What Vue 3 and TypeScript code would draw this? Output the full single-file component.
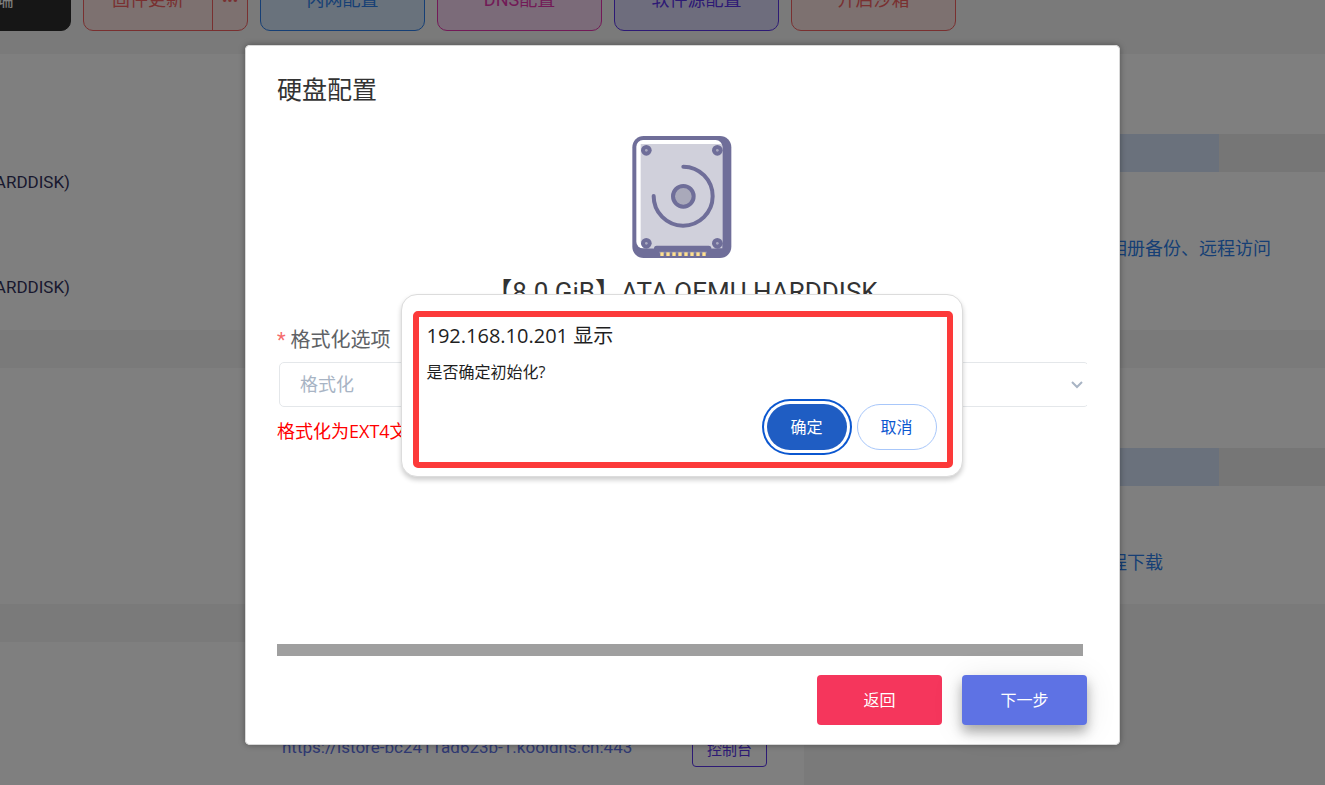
<script setup lang="ts">
import { ref } from 'vue'

interface Action {
  label: string
  tone: string
  more?: boolean
}

const actions: Action[] = [
  { label: '打开终端', tone: 'dark' },
  { label: '固件更新', tone: 'coral', more: true },
  { label: '内网配置', tone: 'blue' },
  { label: 'DNS配置', tone: 'pink' },
  { label: '软件源配置', tone: 'violet' },
  { label: '开启沙箱', tone: 'coral' },
]

interface Panel {
  disks: string[]
  used: number
  link: string
  size: string
}

const panels: Panel[] = [
  { disks: ['(QEMU HARDDISK)', '(QEMU HARDDISK)'], used: 76, link: '相册备份、远程访问', size: 'wide' },
  { disks: [], used: 76, link: '远程下载', size: 'narrow' },
]

const pins = [152, 170, 188, 206, 224, 242, 260, 278]
const screws = [
  [110, 76],
  [323, 76],
  [110, 355],
  [323, 355],
]

const formatOption = ref('')
</script>

<template>
  <div class="page">
    <nav class="toolbar">
      <div v-for="a in actions" :key="a.label" class="action" :class="a.tone">
        <button type="button" class="action-main">{{ a.label }}</button>
        <button v-if="a.more" type="button" class="action-more" aria-label="更多">•••</button>
      </div>
    </nav>

    <main class="panels">
      <section v-for="p in panels" :key="p.link" class="panel" :class="p.size">
        <div class="disks">
          <span v-for="(d, i) in p.disks" :key="i" class="disk">{{ d }}</span>
        </div>
        <div class="usage">
          <div class="meter"><div class="meter-fill" :style="{ width: p.used + '%' }"></div></div>
          <a href="#" class="usage-link">{{ p.link }}</a>
        </div>
      </section>
      <section class="panel remote">
        <a href="#" class="remote-url">https://istore-bc2411ad623b-1.kooldns.cn:443</a>
        <button type="button" class="console">控制台</button>
      </section>
    </main>

    <div class="overlay">
      <div class="modal" role="dialog" aria-labelledby="modal-title">
        <h2 id="modal-title" class="modal-title">硬盘配置</h2>
        <div class="modal-body">
          <svg class="drive" viewBox="67 33 300 366" aria-hidden="true">
            <rect x="68" y="33" width="297" height="366" rx="34" fill="#6f6e99" />
            <rect x="80" y="45" width="258" height="325" rx="20" fill="#fff" />
            <path d="M93 57H336Q338 60 338 66V370H106Q93 366 93 350Z" fill="#d0d0db" />
            <path d="M133 372V370Q133 362 141 362H297Q305 362 305 370V372Z" fill="#6f6e99" />
            <rect x="148" y="380" width="144" height="5" fill="#8786aa" />
            <rect v-for="x in pins" :key="x" :x="x" y="382" width="10" height="11" fill="#ffe08f" />
            <g v-for="(s, i) in screws" :key="i">
              <circle :cx="s[0]" :cy="s[1]" r="16" fill="#6f6e99" />
              <circle :cx="s[0]" :cy="s[1]" r="4" fill="#a9a8bf" />
            </g>
            <circle cx="221" cy="214" r="31" fill="#a9a9ba" stroke="#6f6e99" stroke-width="12" />
            <path d="M221 125A88.500 88.500 0 1 1 132 213" fill="none" stroke="#6f6e99" stroke-width="12" stroke-linecap="round" />
          </svg>
          <h3 class="drive-name">【8.0 GiB】ATA QEMU HARDDISK</h3>
          <label class="field-label" for="format"><span class="required">*</span> 格式化选项</label>
          <div class="field">
            <select id="format" v-model="formatOption" class="select">
              <option value="">格式化</option>
            </select>
            <svg class="chevron" viewBox="0 0 12 8" aria-hidden="true">
              <path d="M1 1L6 6L11 1" fill="none" stroke="#a8b4c4" stroke-width="2" />
            </svg>
          </div>
          <p class="hint">格式化为EXT4文件系统</p>
        </div>
        <div class="scrollbar"></div>
        <footer class="modal-footer">
          <button type="button" class="btn back">返回</button>
          <button type="button" class="btn next">下一步</button>
        </footer>

        <div class="alert" role="alertdialog" aria-labelledby="alert-title">
          <div class="alert-frame">
            <h4 id="alert-title" class="alert-title">192.168.10.201 显示</h4>
            <p class="alert-text">是否确定初始化?</p>
            <div class="alert-actions">
              <button type="button" class="pill confirm">确定</button>
              <button type="button" class="pill cancel">取消</button>
            </div>
          </div>
        </div>
      </div>
    </div>
  </div>
</template>

<style>
body {
  margin: 0;
}
</style>

<style scoped>
.page {
  position: relative;
  height: 100vh;
  overflow: hidden;
  background: #f4f4f4;
  font-family: Roboto, "Noto Sans CJK SC", sans-serif;
  font-size: 18px;
}

.page * {
  box-sizing: border-box;
}

button,
select {
  font-family: inherit;
}

.toolbar {
  display: flex;
  align-items: flex-end;
  gap: 12px;
  height: 31px;
  margin-left: -94px;
}

.action {
  display: flex;
  flex: none;
  width: 165px;
  height: 66px;
  border: 1px solid;
  border-radius: 10px;
  overflow: hidden;
}

.action-main,
.action-more {
  padding: 0;
  border: 0;
  background: none;
  color: inherit;
  font-size: 18px;
}

.action-main {
  flex: 1;
}

.action-more {
  width: 35px;
  padding-top: 4px;
  border-left: 1px solid;
  font-size: 16px;
}

.dark {
  background: #2d2d2d;
  border-color: #2d2d2d;
  color: #fff;
}

.dark .action-main {
  padding-right: 22px;
}

.coral {
  background: #fae2e0;
  border-color: #f26060;
  color: #f26060;
}

.blue {
  background: #d3e4f8;
  border-color: #2d7fea;
  color: #2d7fea;
}

.pink {
  background: #f6d6f2;
  border-color: #e535ae;
  color: #e535ae;
}

.violet {
  background: #dddafa;
  border-color: #5a35ea;
  color: #5a35ea;
}

.panels {
  display: flex;
  flex-direction: column;
  gap: 38px;
  margin-top: 23px;
}

.panel {
  display: flex;
  flex: none;
  height: 276px;
  background: #fff;
}

.panel.narrow {
  height: 236px;
}

.disks {
  display: flex;
  flex-direction: column;
  align-items: flex-end;
  gap: 75px;
  width: 70px;
  padding-top: 113px;
}

.disk {
  color: #32325d;
  font-size: 17px;
  line-height: 30px;
  white-space: nowrap;
}

.usage {
  flex: 1;
  margin-left: 814px;
  padding-top: 80px;
}

.meter {
  height: 38px;
  background: #ededed;
}

.meter-fill {
  height: 100%;
  background: #d4e2f8;
}

.usage-link {
  display: block;
  margin-top: 62px;
  color: #2d7fea;
  line-height: 30px;
  text-decoration: none;
}

.wide .usage-link {
  margin-left: 225px;
}

.narrow .usage-link {
  margin-left: 207px;
}

.remote {
  align-items: flex-start;
  justify-content: space-between;
  width: 804px;
  padding: 87px 37px 0 282px;
}

.remote-url {
  color: #5e72e4;
  font-size: 17px;
  line-height: 36px;
  text-decoration: none;
}

.console {
  width: 75px;
  height: 38px;
  padding: 0;
  border: 1px solid #5a35ea;
  border-radius: 4px;
  background: none;
  color: #5a35ea;
  font-size: 15px;
}

.overlay {
  position: absolute;
  inset: 0;
  display: flex;
  justify-content: center;
  align-items: flex-start;
  padding: 45px 0 0 40px;
  background: rgba(0, 0, 0, 0.5);
}

.modal {
  position: relative;
  display: flex;
  flex-direction: column;
  width: 100%;
  max-width: 875px;
  min-height: 700px;
  padding: 29px 33px 20px 32px;
  border-radius: 5px;
  background: #fff;
  box-shadow: inset 0 0 0 1px #d8d8d8, 0 0 6px rgba(0, 0, 0, 0.35);
}

.modal-title {
  margin: 0;
  color: #333;
  font-size: 25px;
  font-weight: 400;
  line-height: 34px;
}

.modal-body {
  display: flex;
  flex: 1;
  flex-direction: column;
  padding-top: 28px;
}

.drive {
  align-self: center;
  width: 100px;
  height: 122px;
}

.drive-name {
  margin: 16px 0 0;
  color: #333;
  font-size: 26px;
  font-weight: 400;
  line-height: 36px;
  text-align: center;
}

.field-label {
  margin-top: 15px;
  color: #606266;
  font-size: 20px;
  line-height: 30px;
}

.required {
  color: #f56c6c;
}

.field {
  position: relative;
  margin-top: 7px;
  padding-left: 2px;
  overflow: hidden;
}

.select {
  display: block;
  width: calc(100% + 2px);
  height: 45px;
  padding: 0 20px;
  border: 1px solid #e4e7ea;
  border-radius: 5px;
  appearance: none;
  background: #fff;
  color: #a8b4c4;
  font-size: 18px;
}

.chevron {
  position: absolute;
  top: 19px;
  right: 4px;
  width: 12px;
  height: 8px;
}

.hint {
  margin: 9px 0 0;
  color: #f00;
  font-family: "Open Sans", "Noto Sans CJK SC", sans-serif;
  font-size: 18px;
  line-height: 30px;
}

.scrollbar {
  height: 12px;
  margin-right: 4px;
  background: #9f9f9f;
}

.modal-footer {
  display: flex;
  justify-content: flex-end;
  gap: 20px;
  padding-top: 19px;
}

.btn {
  width: 125px;
  height: 50px;
  padding: 0 0 2px;
  border: 0;
  border-radius: 4px;
  color: #fff;
  font-size: 16px;
}

.back {
  background: #f5365c;
}

.next {
  background: #5e72e4;
  box-shadow: 0 7px 12px rgba(0, 0, 0, 0.3), 0 4px 32px rgba(0, 0, 0, 0.1);
}

.alert {
  position: absolute;
  top: 249px;
  left: 50%;
  width: 562px;
  margin-left: -282px;
  padding: 16px 9px 8px 11px;
  border: 1px solid #dcdcdc;
  border-radius: 16px;
  background: #fff;
  box-shadow: 0 3px 5px rgba(0, 0, 0, 0.2);
  font-family: "Open Sans", "Noto Sans CJK SC", sans-serif;
}

.alert-frame {
  padding: 4px 10px 12px 8px;
  border: 6px solid #fc3a3a;
  border-radius: 5px;
}

.alert-title {
  margin: 0;
  color: #1f1f1f;
  font-size: 20px;
  font-weight: 400;
  line-height: 30px;
}

.alert-text {
  margin: 9px 0 0;
  color: #1f1f1f;
  font-size: 16px;
  line-height: 24px;
}

.alert-actions {
  display: flex;
  justify-content: flex-end;
  gap: 10px;
  margin-top: 20px;
}

.pill {
  width: 80px;
  height: 46px;
  padding: 0 0 2px;
  border-radius: 23px;
  font-size: 16px;
}

.confirm {
  border: 0;
  background: #1f5dc3;
  box-shadow: 0 0 0 3px #fff, 0 0 0 5px #0b57d0;
  color: #fff;
}

.cancel {
  border: 1px solid #a8c7fa;
  background: #fff;
  color: #0b57d0;
}
</style>
